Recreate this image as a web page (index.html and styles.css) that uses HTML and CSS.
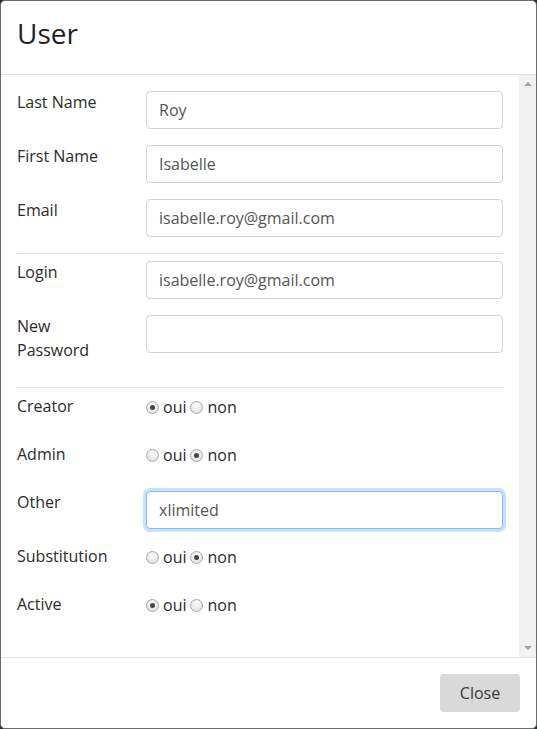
FILE: index.html
```html
<!DOCTYPE html>
<html>
<head>
<meta charset="utf-8">
<link rel="stylesheet" href="styles.css">
</head>
<body>
<div class="modal">
  <div class="modal-header"><h5 class="modal-title">User</h5></div>
  <div class="modal-body-wrap">
    <div class="modal-body">
      <div class="form-group">
        <label>Last Name</label>
        <input class="form-control" type="text" value="Roy">
      </div>
      <div class="form-group">
        <label>First Name</label>
        <input class="form-control" type="text" value="Isabelle">
      </div>
      <div class="form-group">
        <label>Email</label>
        <input class="form-control" type="text" value="isabelle.roy@gmail.com">
      </div>
      <hr class="sep">
      <div class="form-group">
        <label>Login</label>
        <input class="form-control" type="text" value="isabelle.roy@gmail.com">
      </div>
      <div class="form-group form-group-tall">
        <label class="narrow">New Password</label>
        <input class="form-control" type="password" value="">
      </div>
      <hr class="sep">
      <div class="form-group radio-row">
        <label>Creator</label>
        <div class="radios">
          <span class="radio checked"></span><span class="opt">oui</span>
          <span class="radio"></span><span class="opt">non</span>
        </div>
      </div>
      <div class="form-group radio-row">
        <label>Admin</label>
        <div class="radios">
          <span class="radio"></span><span class="opt">oui</span>
          <span class="radio checked"></span><span class="opt">non</span>
        </div>
      </div>
      <div class="form-group">
        <label>Other</label>
        <input class="form-control focused" type="text" value="xlimited">
      </div>
      <div class="form-group radio-row">
        <label>Substitution</label>
        <div class="radios">
          <span class="radio"></span><span class="opt">oui</span>
          <span class="radio checked"></span><span class="opt">non</span>
        </div>
      </div>
      <div class="form-group radio-row">
        <label>Active</label>
        <div class="radios">
          <span class="radio checked"></span><span class="opt">oui</span>
          <span class="radio"></span><span class="opt">non</span>
        </div>
      </div>
    </div>
    <div class="scrollbar">
      <span class="arrow up"></span>
      <span class="arrow down"></span>
    </div>
  </div>
  <div class="modal-footer">
    <button class="btn">Close</button>
  </div>
</div>
</body>
</html>
```
FILE: styles.css
```css
* { box-sizing: border-box; }
html, body { margin: 0; padding: 0; }
body {
  background: #2a2d2f;
  width: 537px;
  height: 729px;
  overflow: hidden;
  font-family: "Open Sans", "Liberation Sans", sans-serif;
  font-size: 16px;
  color: #2a2a2a;
}
.modal {
  width: 537px;
  height: 729px;
  background: #fff;
  border: 1px solid #6b6b6b;
  border-radius: 5px;
  display: flex;
  flex-direction: column;
}
.modal-header {
  height: 74px;
  border-bottom: 1px solid #e2e2e2;
  padding: 13px 16px;
}
.modal-title {
  margin: 0;
  font-size: 28px;
  font-weight: 400;
  line-height: 38px;
  color: #1f1f1f;
}
.modal-body-wrap {
  display: flex;
  height: 583px;
  border-bottom: 1px solid #e2e2e2;
}
.modal-body {
  flex: 1;
  padding: 16px;
}
.scrollbar {
  width: 17px;
  background: #f1f1f1;
  display: flex;
  flex-direction: column;
  justify-content: space-between;
  align-items: center;
  padding: 7px 0;
}
.arrow {
  width: 0; height: 0;
  border-left: 4px solid transparent;
  border-right: 4px solid transparent;
}
.arrow.up { border-bottom: 4px solid #a3a3a3; }
.arrow.down { border-top: 4px solid #a3a3a3; }
.form-group {
  display: grid;
  grid-template-columns: 129px 1fr;
  margin-bottom: 16px;
  align-items: start;
}
.form-group-tall { margin-bottom: 24px; }
.form-group label {
  line-height: 24px;
  margin: -1px 0 1px;
  color: #2b2b2b;
}
.form-group label.narrow { width: 80px; }
.form-control {
  height: 38px;
  width: 100%;
  border: 1px solid #ced4da;
  border-radius: 4px;
  padding: 6px 12px;
  font-family: inherit;
  font-size: 16px;
  color: #555;
  background: #fff;
  outline: none;
}
.form-control.focused {
  border-color: #80bdff;
  box-shadow: 0 0 0 3px rgba(0, 123, 255, 0.22);
}
.sep {
  border: 0;
  border-top: 1px solid #e3e3e3;
  margin: 0 0 7px;
}
.radio-row { min-height: 32px; }
.radios {
  display: flex;
  align-items: center;
  height: 24px;
}
.radio {
  width: 13px;
  height: 13px;
  border-radius: 50%;
  border: 1px solid #a9a9a9;
  background: radial-gradient(circle at 50% 35%, #fbfbfb, #dcdcdc);
  position: relative;
  margin-right: 4px;
}
.radio.checked::after {
  content: "";
  position: absolute;
  left: 3px; top: 3px;
  width: 5px; height: 5px;
  border-radius: 50%;
  background: #444;
}
.opt { margin-right: 4px; color: #2b2b2b; }
.modal-footer {
  flex: 1;
  display: flex;
  justify-content: flex-end;
  align-items: flex-start;
  padding: 16px;
}
.btn {
  width: 80px;
  height: 38px;
  border: 0;
  border-radius: 4px;
  background: #d9d9d9;
  color: #3a3a3a;
  font-family: inherit;
  font-size: 16px;
}
```
